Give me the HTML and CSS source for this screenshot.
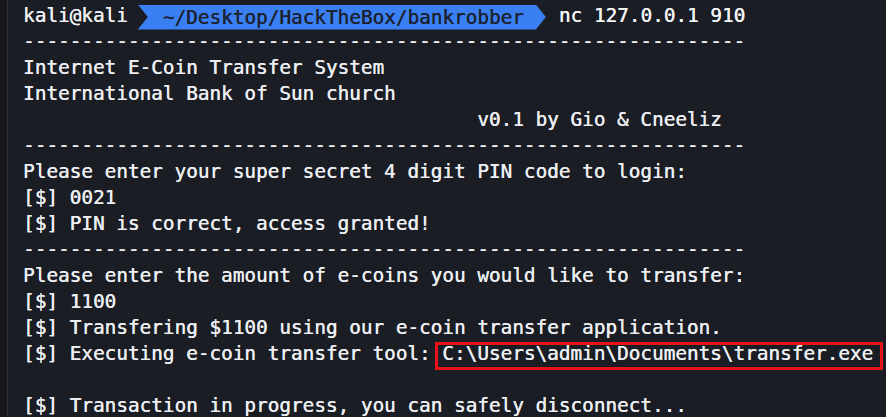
FILE: index.html
```html
<!DOCTYPE html>
<html>
<head>
<meta charset="utf-8">
<link rel="stylesheet" href="styles.css">
</head>
<body>
<div class="term">
  <div class="gutter"></div>
  <div class="screen">
    <div class="line prompt"><span class="user">kali@kali</span><span class="seg">~/Desktop/HackTheBox/bankrobber</span><span class="cmd">nc 127.0.0.1 910</span></div>
    <div class="line">--------------------------------------------------------------</div>
    <div class="line">Internet E-Coin Transfer System</div>
    <div class="line">International Bank of Sun church</div>
    <div class="line">                                       v0.1 by Gio &amp; Cneeliz</div>
    <div class="line">--------------------------------------------------------------</div>
    <div class="line">Please enter your super secret 4 digit PIN code to login:</div>
    <div class="line">[$] 0021</div>
    <div class="line">[$] PIN is correct, access granted!</div>
    <div class="line">--------------------------------------------------------------</div>
    <div class="line">Please enter the amount of e-coins you would like to transfer:</div>
    <div class="line">[$] 1100</div>
    <div class="line">[$] Transfering $1100 using our e-coin transfer application.</div>
    <div class="line">[$] Executing e-coin transfer tool: <span class="mark">C:\Users\admin\Documents\transfer.exe</span></div>
    <div class="line"> </div>
    <div class="line">[$] Transaction in progress, you can safely disconnect...</div>
  </div>
</div>
</body>
</html>
```
FILE: styles.css
```css
html, body {
  margin: 0;
  padding: 0;
  background: #1b1d24;
  overflow: hidden;
}
.term {
  display: flex;
  width: 886px;
  height: 417px;
  background: #1b1d24;
}
.gutter {
  width: 7px;
  background: #16181e;
  border-right: 1px solid #2c2f37;
  flex: none;
}
.screen {
  padding: 3px 0 0 15px;
  font-family: "DejaVu Sans Mono", "Liberation Mono", monospace;
  font-size: 19.35px;
  color: #eceef2;
  text-shadow: 0.35px 0 0 currentColor;
}
.line {
  height: 26px;
  line-height: 26px;
  white-space: pre;
}
.prompt {
  display: flex;
  align-items: center;
}
.user {
  color: #eef0f4;
}
.seg {
  display: inline-block;
  height: 25px;
  line-height: 25px;
  margin: 2px 13px 0 10px;
  padding: 0 22px 0 25px;
  background: #3a80f2;
  color: #1c2230;
  clip-path: polygon(0 0, calc(100% - 10px) 0, 100% 50%, calc(100% - 10px) 100%, 0 100%, 10px 50%);
}
.cmd {
  color: #f2f3f5;
}
.mark {
  position: relative;
  display: inline-block;
  height: 26px;
}
.mark::after {
  content: "";
  position: absolute;
  left: -7px;
  right: -10px;
  top: 1px;
  bottom: -3px;
  border: 3.5px solid #e8121a;
}
```
